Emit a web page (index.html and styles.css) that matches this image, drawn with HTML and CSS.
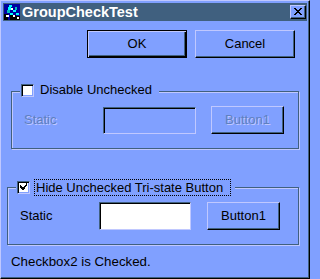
FILE: index.html
```html
<!DOCTYPE html>
<html>
<head>
<meta charset="utf-8">
<link rel="stylesheet" href="styles.css">
</head>
<body>
<div class="window">
  <div class="titlebar">
    <svg class="appicon" width="16" height="16" viewBox="0 0 16 16" shape-rendering="crispEdges">
      <rect x="0" y="0" width="16" height="16" fill="#0000a0"/>
      <rect x="0" y="10" width="4" height="6" fill="#000"/>
      <rect x="6" y="11" width="6" height="5" fill="#000"/>
      <rect x="12" y="12" width="4" height="4" fill="#000"/>
      <rect x="5" y="1" width="3" height="2" fill="#00ffff"/>
      <rect x="4" y="3" width="3" height="3" fill="#00ffff"/>
      <rect x="3" y="6" width="3" height="3" fill="#00c0c0"/>
      <rect x="7" y="4" width="2" height="2" fill="#ffffff"/>
      <rect x="9" y="6" width="3" height="2" fill="#00ffff"/>
      <rect x="11" y="3" width="2" height="3" fill="#00c0c0"/>
      <rect x="2" y="11" width="3" height="2" fill="#ffffff"/>
      <rect x="6" y="9" width="3" height="2" fill="#00ffff"/>
      <rect x="9" y="11" width="2" height="2" fill="#ffffff"/>
      <rect x="12" y="9" width="3" height="2" fill="#00ffff"/>
      <rect x="13" y="13" width="2" height="2" fill="#ffffff"/>
    </svg>
    <span class="title">GroupCheckTest</span>
    <span class="spacer"></span>
    <div class="closebtn">
      <svg width="8" height="7" viewBox="0 0 8 7" shape-rendering="crispEdges">
        <path d="M0 0h2v1h-2zM6 0h2v1h-2zM1 1h2v1h-2zM5 1h2v1h-2zM2 2h4v1h-4zM3 3h2v1h-2zM2 4h4v1h-4zM1 5h2v1h-2zM5 5h2v1h-2zM0 6h2v1h-2zM6 6h2v1h-2z" fill="#000"/>
      </svg>
    </div>
  </div>

  <div class="toprow">
    <div class="btn default ok">OK</div>
    <div class="btn cancel">Cancel</div>
  </div>

  <div class="group group1">
    <div class="legend legend1">
      <span class="check"></span>
      <span class="legend-text">Disable Unchecked</span>
    </div>
    <div class="row row1">
      <span class="static disabled s1">Static</span>
      <div class="edit edit1"></div>
      <div class="btn disabled-btn b1">Button1</div>
    </div>
  </div>

  <div class="group group2">
    <div class="legend legend2">
      <span class="check checked">
        <svg width="9" height="9" viewBox="0 0 9 9" shape-rendering="crispEdges">
          <path d="M6 1h1v1h-1zM5 2h2v1h-2zM4 3h2v1h-2zM0 2h1v3h-1zM1 3h1v3h-1zM2 4h1v3h-1zM3 4h2v2h-2zM3 6h1v1h-1z" fill="#000"/>
          <path d="M6 0h1v1h-1z" fill="#000"/>
        </svg>
      </span>
      <span class="legend-text focus">Hide Unchecked Tri-state Button</span>
    </div>
    <div class="row row2">
      <span class="static s2">Static</span>
      <div class="edit edit2"></div>
      <div class="btn b2">Button1</div>
    </div>
  </div>

  <div class="status">Checkbox2 is Checked.</div>
</div>
</body>
</html>
```

FILE: styles.css
```css
html, body {
  margin: 0;
  padding: 0;
  background: #80a0ff;
}

.window {
  box-sizing: border-box;
  width: 310px;
  height: 279px;
  background: #80a0ff;
  border-top: 1px solid #c0c8ff;
  border-left: 1px solid #c0c8ff;
  border-right: 1px solid #000;
  border-bottom: 1px solid #000;
  box-shadow: inset -1px -1px 0 #40607f;
  padding: 2px;
  display: flex;
  flex-direction: column;
  font-family: "Liberation Sans", Arial, sans-serif;
  font-size: 13px;
  color: #000;
}

.titlebar {
  height: 18px;
  background: #40607f;
  display: flex;
  align-items: center;
  flex: none;
}

.appicon {
  margin-left: 1px;
  flex: none;
}

.title {
  margin-left: 2px;
  color: #fff;
  font-weight: bold;
  font-size: 14.5px;
  line-height: 18px;
}

.spacer {
  flex: 1;
}

.closebtn {
  box-sizing: border-box;
  width: 16px;
  height: 14px;
  margin-right: 1px;
  background: #80a0ff;
  border-top: 1px solid #c0c8ff;
  border-left: 1px solid #c0c8ff;
  border-right: 1px solid #000;
  border-bottom: 1px solid #000;
  box-shadow: inset -1px -1px 0 #40607f;
  display: flex;
  align-items: center;
  justify-content: center;
  padding: 0 1px 1px 0;
}

.toprow {
  display: flex;
  margin-top: 9px;
  padding-left: 84px;
  gap: 8px;
  flex: none;
}

.btn {
  box-sizing: border-box;
  height: 28px;
  background: #80a0ff;
  border-top: 1px solid #c0c8ff;
  border-left: 1px solid #c0c8ff;
  border-right: 1px solid #000;
  border-bottom: 1px solid #000;
  box-shadow: inset -1px -1px 0 #40607f;
  display: flex;
  align-items: center;
  justify-content: center;
  padding-bottom: 1px;
  flex: none;
}

.btn.default {
  border: 1px solid #000;
  box-shadow: inset 1px 1px 0 #c0c8ff, inset -1px -1px 0 #000, inset -2px -2px 0 #40607f;
}

.ok, .cancel {
  width: 100px;
}

.group {
  box-sizing: border-box;
  border: 1px solid #40607f;
  box-shadow: inset 1px 1px 0 #c0c8ff, 1px 1px 0 #c0c8ff;
  display: flex;
  flex-direction: column;
  padding-bottom: 14px;
  flex: none;
}

.group1 {
  margin-top: 33px;
  margin-left: 8px;
  width: 288px;
}

.group2 {
  margin-top: 38px;
  margin-left: 4px;
  width: 292px;
}

.legend {
  align-self: flex-start;
  display: flex;
  align-items: center;
  background: #80a0ff;
  margin-top: -10px;
  height: 16px;
}

.legend1 {
  margin-left: 8px;
  padding: 0 7px 0 1px;
  gap: 6px;
}

.legend2 {
  margin-left: 8px;
  height: 18px;
  padding: 0 4px 0 1px;
  gap: 4px;
}

.check {
  box-sizing: border-box;
  width: 13px;
  height: 13px;
  background: #fff;
  border-top: 1px solid #40607f;
  border-left: 1px solid #40607f;
  border-right: 1px solid #c0c8ff;
  border-bottom: 1px solid #c0c8ff;
  box-shadow: inset 1px 1px 0 #000, inset -1px -1px 0 #80a0ff;
  display: flex;
  align-items: center;
  justify-content: center;
  padding: 1px 0 0 1px;
  flex: none;
}

.legend-text {
  line-height: 16px;
  white-space: nowrap;
}

.focus {
  box-sizing: border-box;
  width: 197px;
  height: 17px;
  border: 1px dotted #000;
  padding-left: 1px;
  line-height: 15px;
}

.row {
  display: flex;
  align-items: flex-end;
}

.row1 {
  margin-top: 8px;
  padding-left: 12px;
}

.row2 {
  margin-top: 6px;
  padding-left: 12px;
}

.static {
  width: 79px;
  align-self: center;
  line-height: 16px;
  flex: none;
}

.disabled {
  color: #5f7fbf;
  text-shadow: 1px 1px 0 #c0c8ff;
}

.edit {
  box-sizing: border-box;
  border-top: 1px solid #40607f;
  border-left: 1px solid #40607f;
  border-right: 1px solid #c0c8ff;
  border-bottom: 1px solid #c0c8ff;
  box-shadow: inset 1px 1px 0 #000;
  flex: none;
}

.edit1 {
  width: 93px;
  height: 27px;
  background: #80a0ff;
}

.edit2 {
  width: 92px;
  height: 28px;
  background: #fff;
}

.b1 {
  width: 73px;
  margin-left: 15px;
  color: #5f7fbf;
  text-shadow: 1px 1px 0 #c0c8ff;
}

.b2 {
  width: 73px;
  margin-left: 16px;
}

.status {
  margin-top: 9px;
  margin-left: 8px;
  line-height: 16px;
  font-size: 13.3px;
  flex: none;
}
```
